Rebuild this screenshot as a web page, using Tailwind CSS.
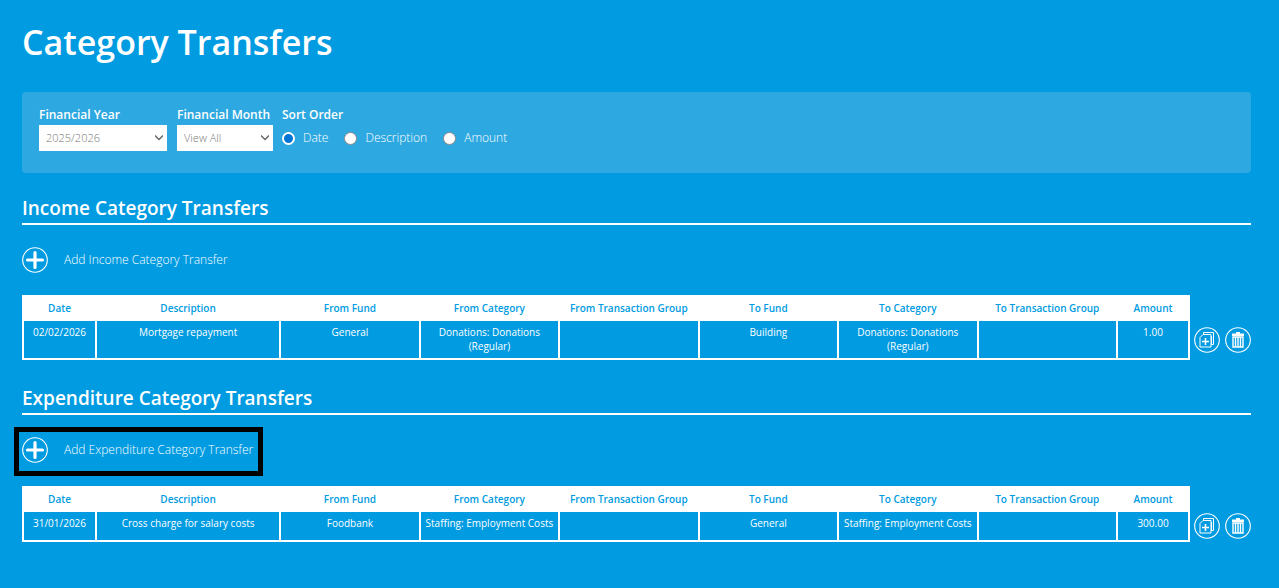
<!DOCTYPE html>
<html lang="en">
  <head>
    <meta charset="UTF-8" />
    <meta name="viewport" content="width=device-width, initial-scale=1.0" />
    <title>Category Transfers</title>
    <script src="https://cdn.jsdelivr.net/npm/@tailwindcss/browser@4"></script>
  </head>
  <body class="min-h-screen bg-[#009be1] font-['Open_Sans',sans-serif] text-white">
    <!-- Shared icons -->
    <svg class="hidden">
      <symbol id="icon-add" viewBox="0 0 26 26">
        <circle cx="13" cy="13" r="12.3" fill="none" stroke="currentColor" stroke-width="1.1" />
        <path d="M13 5.500v15M5.500 13h15" stroke="currentColor" stroke-width="3.2" stroke-linecap="round" />
      </symbol>
      <symbol id="icon-copy" viewBox="0 0 26 26">
        <circle cx="13" cy="13" r="12.3" fill="none" stroke="currentColor" stroke-width="1.1" />
        <path d="M9.500 7V5.500h10v12h-2M11 7.500h6v12.500H6V10.500l3-3h2M17.500 9v9" fill="none" stroke="currentColor" stroke-width="1" />
        <path d="M11.500 11v7M8 14.500h7" stroke="currentColor" stroke-width="1.600" />
      </symbol>
      <symbol id="icon-delete" viewBox="0 0 26 26">
        <circle cx="13" cy="13" r="12.3" fill="none" stroke="currentColor" stroke-width="1.1" />
        <path d="M11 5h4v1.500h4V9H7V6.500h4z" fill="currentColor" />
        <path d="M8 10h10v10H8zM10.500 10v10M13 10v10M15.500 10v10" fill="none" stroke="currentColor" stroke-width="1.400" />
      </symbol>
    </svg>

    <main class="pt-5 pr-7 pb-8 pl-[22px]">
      <h1 class="text-[34px] leading-[44px] font-semibold">Category Transfers</h1>

      <form class="mt-7 flex min-h-[81px] items-start rounded bg-[#2ea8e0] px-[17px] pt-[13px]">
        <div class="mr-[10px] w-32">
          <label class="block text-xs leading-5 font-semibold" for="year">Financial Year</label>
          <div class="relative">
            <select class="block h-[26px] w-full appearance-none bg-white pl-[7px] text-[11px] font-light text-[#777]" id="year">
              <option>2025/2026</option>
            </select>
            <svg class="pointer-events-none absolute top-[9px] right-1 h-2 w-2" viewBox="0 0 8 8" fill="none" stroke="#666" stroke-width="1.500">
              <path d="M0 1.500l4 4 4-4" />
            </svg>
          </div>
        </div>
        <div class="mr-[9px] w-24">
          <label class="block text-xs leading-5 font-semibold whitespace-nowrap" for="month">Financial Month</label>
          <div class="relative">
            <select class="block h-[26px] w-full appearance-none bg-white pl-[7px] text-[11px] font-light text-[#777]" id="month">
              <option>View All</option>
            </select>
            <svg class="pointer-events-none absolute top-[9px] right-1 h-2 w-2" viewBox="0 0 8 8" fill="none" stroke="#666" stroke-width="1.500">
              <path d="M0 1.500l4 4 4-4" />
            </svg>
          </div>
        </div>
        <fieldset>
          <legend class="text-xs leading-5 font-semibold">Sort Order</legend>
          <div class="flex h-[26px] items-center gap-4 text-xs font-light">
            <label class="flex items-center gap-2">
              <input class="size-[13px] appearance-none rounded-full border-2 border-white bg-[#0075d6]" type="radio" name="sort" checked />
              Date
            </label>
            <label class="flex items-center gap-2">
              <input class="size-[13px] appearance-none rounded-full border border-[#8a8a8a] bg-white" type="radio" name="sort" />
              Description
            </label>
            <label class="flex items-center gap-2">
              <input class="size-[13px] appearance-none rounded-full border border-[#8a8a8a] bg-white" type="radio" name="sort" />
              Amount
            </label>
          </div>
        </fieldset>
      </form>

      <section class="mt-5">
        <h2 class="border-b-2 border-white text-[19px] leading-[30px] font-semibold">Income Category Transfers</h2>
        <button class="mt-[22px] flex h-[26px] items-center gap-4 text-xs font-light" type="button">
          <svg class="size-[26px]"><use href="#icon-add" /></svg>
          Add Income Category Transfer
        </button>
        <table class="mt-[22px] w-full table-fixed border-collapse text-center text-[10px] leading-[14px]">
          <thead>
            <tr class="h-6 text-[#009be1]">
              <th class="w-[73px] border-2 border-white bg-white font-semibold">Date</th>
              <th class="w-[15%] border-2 border-white bg-white font-semibold">Description</th>
              <th class="border-2 border-white bg-white font-semibold">From Fund</th>
              <th class="border-2 border-white bg-white font-semibold">From Category</th>
              <th class="border-2 border-white bg-white font-semibold">From Transaction Group</th>
              <th class="border-2 border-white bg-white font-semibold">To Fund</th>
              <th class="border-2 border-white bg-white font-semibold">To Category</th>
              <th class="border-2 border-white bg-white font-semibold">To Transaction Group</th>
              <th class="w-[72px] border-2 border-white bg-white font-semibold">Amount</th>
              <td class="w-[62px]"></td>
            </tr>
          </thead>
          <tbody>
            <tr class="align-top">
              <td class="border-2 border-white pt-1">02/02/2026</td>
              <td class="border-2 border-white pt-1">Mortgage repayment</td>
              <td class="border-2 border-white pt-1">General</td>
              <td class="border-2 border-white px-4 pt-1 pb-[5px]">Donations: Donations (Regular)</td>
              <td class="border-2 border-white pt-1"></td>
              <td class="border-2 border-white pt-1">Building</td>
              <td class="border-2 border-white px-4 pt-1 pb-[5px]">Donations: Donations (Regular)</td>
              <td class="border-2 border-white pt-1"></td>
              <td class="border-2 border-white pt-1">1.00</td>
              <td class="align-middle">
                <div class="flex justify-end gap-[5px]">
                  <button type="button" aria-label="Copy"><svg class="size-[26px]"><use href="#icon-copy" /></svg></button>
                  <button type="button" aria-label="Delete"><svg class="size-[26px]"><use href="#icon-delete" /></svg></button>
                </div>
              </td>
            </tr>
          </tbody>
        </table>
      </section>

      <section class="mt-[23px]">
        <h2 class="border-b-2 border-white text-[19px] leading-[30px] font-semibold">Expenditure Category Transfers</h2>
        <button class="mt-3 -ml-2 flex h-[49px] items-center gap-4 border-[5px] border-black pr-[5px] pb-[3px] pl-[3px] text-xs font-light" type="button">
          <svg class="size-[26px]"><use href="#icon-add" /></svg>
          Add Expenditure Category Transfer
        </button>
        <table class="mt-[10px] w-full table-fixed border-collapse text-center text-[10px] leading-[14px]">
          <thead>
            <tr class="h-6 text-[#009be1]">
              <th class="w-[73px] border-2 border-white bg-white font-semibold">Date</th>
              <th class="w-[15%] border-2 border-white bg-white font-semibold">Description</th>
              <th class="border-2 border-white bg-white font-semibold">From Fund</th>
              <th class="border-2 border-white bg-white font-semibold">From Category</th>
              <th class="border-2 border-white bg-white font-semibold">From Transaction Group</th>
              <th class="border-2 border-white bg-white font-semibold">To Fund</th>
              <th class="border-2 border-white bg-white font-semibold">To Category</th>
              <th class="border-2 border-white bg-white font-semibold">To Transaction Group</th>
              <th class="w-[72px] border-2 border-white bg-white font-semibold">Amount</th>
              <td class="w-[62px]"></td>
            </tr>
          </thead>
          <tbody>
            <tr class="h-[30px] align-top">
              <td class="border-2 border-white pt-1">31/01/2026</td>
              <td class="border-2 border-white pt-1">Cross charge for salary costs</td>
              <td class="border-2 border-white pt-1">Foodbank</td>
              <td class="border-2 border-white pt-1">Staffing: Employment Costs</td>
              <td class="border-2 border-white pt-1"></td>
              <td class="border-2 border-white pt-1">General</td>
              <td class="border-2 border-white pt-1">Staffing: Employment Costs</td>
              <td class="border-2 border-white pt-1"></td>
              <td class="border-2 border-white pt-1">300.00</td>
              <td class="align-middle">
                <div class="flex justify-end gap-[5px]">
                  <button type="button" aria-label="Copy"><svg class="size-[26px]"><use href="#icon-copy" /></svg></button>
                  <button type="button" aria-label="Delete"><svg class="size-[26px]"><use href="#icon-delete" /></svg></button>
                </div>
              </td>
            </tr>
          </tbody>
        </table>
      </section>
    </main>
  </body>
</html>
